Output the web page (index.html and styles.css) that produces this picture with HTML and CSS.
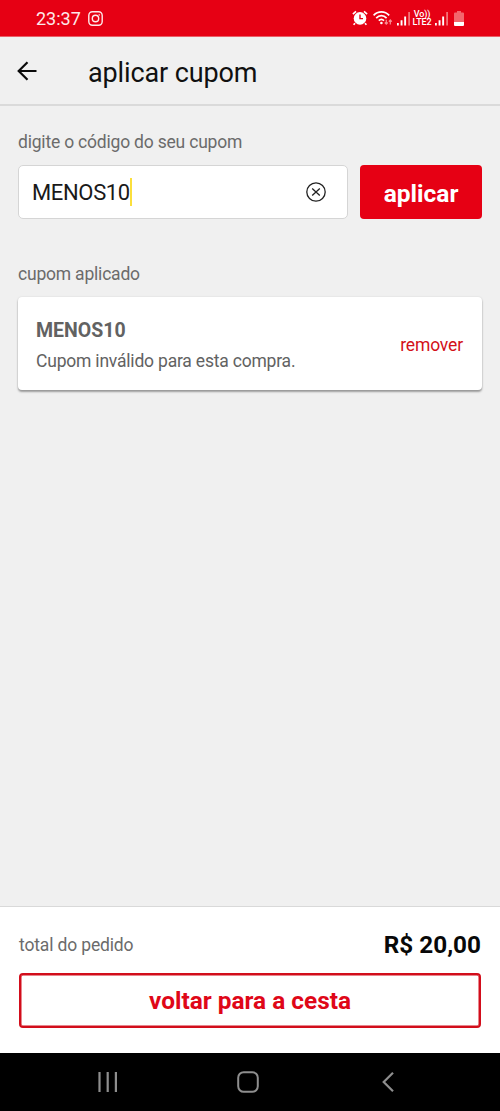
FILE: index.html
```html
<!DOCTYPE html>
<html lang="pt-BR">
<head>
<meta charset="utf-8">
<title>aplicar cupom</title>
<link rel="stylesheet" href="styles.css">
</head>
<body>
<div class="screen">
  <div class="status">
    <div class="status-left">
      <span class="clock">23:37</span>
      <svg class="insta" width="15" height="15" viewBox="0 0 15 15" fill="none" stroke="#fde9e9" stroke-width="1.4"><rect x=".8" y=".8" width="13.4" height="13.4" rx="3.6"/><circle cx="7.5" cy="7.5" r="3.2"/><circle cx="11.2" cy="3.9" r=".4" stroke-width=".9"/></svg>
    </div>
    <svg class="alarm" width="16" height="16" viewBox="0 0 16 16" fill="none" stroke="#fff"><path d="M.9 4.1 4 1.3M15.1 4.1 12 1.3M3 13.2l-1.4 1.6M13 13.2l1.4 1.6" stroke-width="1.7"/><circle cx="8" cy="8.4" r="6.3" fill="#fff" stroke="none"/><path d="M8 4.6v4h3" stroke="#e60014" stroke-width="1.4"/></svg>
    <svg class="wifi" width="20" height="16" viewBox="0 0 20 16" fill="none" stroke="#fff" stroke-width="1.7"><path d="M.6 5.3C5 .6 11.8.6 16.200 5.300M3.200 8.100C6.300 4.900 10.500 4.900 13.600 8.100M5.800 10.700C7.400 9.100 9.400 9.100 11 10.700"/><circle cx="8.400" cy="13" r="1.300" fill="#fff" stroke="none"/><path d="M13.300 9.700v4.500M11.800 12.500l1.500 1.700 1.500-1.700M17.300 14.500V10M15.800 11.700l1.500-1.700 1.500 1.700" stroke="#f78e93" stroke-width="1.200"/></svg>
    <svg class="signal" width="13" height="15" viewBox="0 0 13 15" fill="#fff"><path d="M0 12h1.800v2.500H0zM3.600 9.300h1.900v5.200H3.600zM7.200 5.500h1.900v9H7.200z"/><path fill="#f47177" d="M11.200 1H13v13.500h-1.800z"/></svg>
    <div class="volte"><span>Vo))</span><span>LTE2</span></div>
    <svg class="signal second" width="13" height="15" viewBox="0 0 13 15" fill="#fff"><path d="M0 12h1.800v2.500H0zM3.600 9.300h1.900v5.200H3.600zM7.200 5.500h1.900v9H7.200z"/><path fill="#f47177" d="M11.200 1H13v13.500h-1.800z"/></svg>
    <svg class="battery" width="10" height="15" viewBox="0 0 10 15"><path fill="#f3666d" d="M3 0h4v1.500h2a1 1 0 0 1 1 1V11H0V2.500a1 1 0 0 1 1-1h2z"/><path fill="#fff" d="M0 11h10v3a1 1 0 0 1-1 1H1a1 1 0 0 1-1-1z"/></svg>
  </div>
  <header class="header">
    <svg width="20" height="20" viewBox="0 0 20 20" fill="none" stroke="#0a0a0a" stroke-width="2.200"><path d="M19.500 10H2M10.500 1.200 1.700 10l8.800 8.800"/></svg>
    <h1 class="title">aplicar cupom</h1>
  </header>
  <main class="content">
    <div class="label">digite o código do seu cupom</div>
    <div class="form">
      <div class="field">
        <span class="code">MENOS10</span><span class="caret"></span>
        <svg class="clear" width="20" height="20" viewBox="0 0 20 20" fill="none" stroke="#222" stroke-width="1.300"><circle cx="10" cy="10" r="9.200"/><path d="m6.200 6.500 7.600 7M13.800 6.500l-7.600 7"/></svg>
      </div>
      <div class="apply">aplicar</div>
    </div>
    <div class="label applied">cupom aplicado</div>
    <section class="card">
      <div class="coupon">
        <strong class="coupon-code">MENOS10</strong>
        <span class="coupon-text">Cupom inválido para esta compra.</span>
      </div>
      <span class="remove">remover</span>
    </section>
  </main>
  <footer class="footer">
    <div class="total"><span class="total-label">total do pedido</span><strong class="price">R$ 20,00</strong></div>
    <div class="back"><span>voltar para a cesta</span></div>
  </footer>
  <nav class="nav">
    <svg width="20" height="20" viewBox="0 0 20 20" stroke="#8e8e8e" stroke-width="2.200"><path d="M1.500 0v20M9.700 0v20M17.900 0v20"/></svg>
    <svg class="home" width="22" height="22" viewBox="0 0 22 22" fill="none" stroke="#8e8e8e" stroke-width="2"><rect x="1.200" y="1.200" width="19.600" height="19.600" rx="5.500"/></svg>
    <svg class="prev" width="12" height="20" viewBox="0 0 12 20" fill="none" stroke="#8e8e8e" stroke-width="2.200"><path d="M11 .8 1.700 10l9.300 9.200"/></svg>
  </nav>
</div>
</body>
</html>
```

FILE: styles.css
```css
* { box-sizing: border-box; }
body { margin: 0; font-family: Roboto, "Liberation Sans", sans-serif; background: #f0f0f0; }
svg { display: block; flex: none; }
.screen { width: 500px; height: 1111px; display: flex; flex-direction: column; overflow: hidden; background: #f0f0f0; }
.status { height: 37px; flex: none; display: flex; align-items: center; background: #e60014; border-bottom: 1px solid #ea5f68; padding: 0 36px; }
.status-left { display: flex; align-items: center; width: 316px; color: #fde9e9; }
.clock { font-size: 18px; line-height: 20px; width: 52px; padding-top: 1px; }
.wifi { margin-left: 5px; }
.signal { margin-left: 4px; margin-top: 1px; }
.volte { display: flex; flex-direction: column; align-items: center; width: 20px; margin-left: 2px; color: #fff; font-size: 9px; line-height: 8px; font-weight: 500; letter-spacing: -.15px; }
.signal.second { margin-left: 3px; }
.battery { margin-left: 6px; }
.header { height: 69px; flex: none; display: flex; align-items: center; padding: 0 17px; border-bottom: 2px solid #dadada; }
.title { margin: 5px 0 0 51px; font-size: 27px; line-height: 32px; font-weight: 400; letter-spacing: -.12px; color: #101010; }
.content { flex: 1; padding: 24px 18px 0; }
.label { height: 24px; font-size: 17.500px; line-height: 25px; letter-spacing: -.2px; color: #6b6b6b; white-space: nowrap; }
.form { display: flex; gap: 12px; margin-top: 11px; }
.field { width: 330px; height: 54px; display: flex; align-items: center; padding: 0 21px 0 13px; background: #fff; border: 1px solid #d5d5d5; border-radius: 5px; }
.code { font-size: 22px; letter-spacing: -.35px; color: #191919; }
.caret { width: 2px; height: 28px; background: #fbdf3c; }
.clear { margin-left: auto; }
.apply { flex: 1; height: 54px; border-radius: 4px; background: #e60014; color: #fff; display: flex; align-items: center; justify-content: center; font-size: 24.500px; font-weight: 700; padding-top: 3px; }
.applied { margin-top: 43px; }
.card { height: 93px; margin-top: 11px; padding: 0 19px 0 18px; display: flex; align-items: center; justify-content: space-between; background: #fff; border-radius: 4px; box-shadow: 0 2px 2px rgba(0,0,0,.34), 0 0 2px rgba(0,0,0,.12); }
.coupon { display: flex; flex-direction: column; gap: 6px; padding-top: 5px; color: #626262; }
.coupon-code { font-size: 19.500px; line-height: 24px; }
.coupon-text { font-size: 17.500px; line-height: 24px; letter-spacing: -.2px; white-space: nowrap; }
.remove { font-size: 17.500px; letter-spacing: -.15px; color: #d31018; padding-top: 2px; }
.footer { height: 147px; flex: none; border-top: 1px solid #d9d9d9; background: #fff; padding: 22px 19px 0; }
.total { display: flex; align-items: center; justify-content: space-between; height: 32px; }
.total-label { font-size: 17.500px; letter-spacing: -.15px; color: #6b6b6b; }
.price { font-size: 24.300px; color: #080808; padding-bottom: 2px; }
.back { height: 55px; margin-top: 12px; border: 2.500px solid #d20d1b; border-radius: 4px; box-shadow: inset 0 0 0 .5px #d20d1b; display: flex; align-items: center; justify-content: center; color: #df0718; font-size: 24.400px; font-weight: 700; }
.nav { height: 58px; flex: none; background: #000; display: flex; align-items: center; padding-left: 98px; }
.home { margin-left: 119px; }
.prev { margin-left: 123px; }
```
